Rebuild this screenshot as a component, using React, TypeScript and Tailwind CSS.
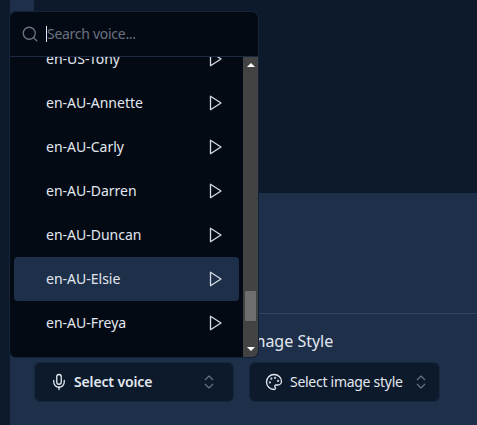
import { ChevronsUpDown, Mic, Palette, Search } from "lucide-react";

const voices = ["en-AU-Annette", "en-AU-Carly", "en-AU-Darren", "en-AU-Duncan", "en-AU-Elsie", "en-AU-Freya"];

function PlayIcon() {
  return (
    <svg width="18" height="18" viewBox="0 0 24 24" fill="none" stroke="currentColor" strokeWidth="1.75" strokeLinejoin="round" strokeLinecap="round" className="text-[#d5dbe4]">
      <polygon points="6 3 20 12 6 21 6 3" />
    </svg>
  );
}

function VoiceRow({ name, active }: { name: string; active?: boolean }) {
  return (
    <div
      className={
        "flex h-11 shrink-0 items-center justify-between rounded pl-8 pr-[15px] text-[#e2e8f0] " +
        (active ? "bg-[#1e2f4a]" : "")
      }
    >
      <span className="text-sm">{name}</span>
      <PlayIcon />
    </div>
  );
}

export default function App() {
  return (
    <div className="relative flex h-[425px] w-[477px] overflow-hidden bg-[#0c1a2b] font-['Noto_Sans',sans-serif]">
      <div className="w-2.5 shrink-0" />
      <main className="flex min-w-0 flex-1 flex-col">
        <div className="flex h-[193px] shrink-0 bg-[#0d1a2b]">
          <div className="h-full w-6 bg-[#1e2f4a]" />
        </div>
        <div className="flex flex-1 flex-col bg-[#1e2f4a] pl-6">
          <div className="mt-[120px] border-t border-[#33445e]" />
          <div className="mt-[15px] pl-[211px] text-base text-[#e2e8f0]">Image Style</div>
          <div className="mt-[9px] flex gap-[15px]">
            <button className="flex h-10 w-[200px] items-center rounded-md border border-[#182740] bg-[#0d1a2b] pl-[15px] pr-[15px] text-sm font-semibold text-[#e2e8f0]">
              <Mic size={18} strokeWidth={1.75} />
              <span className="ml-1.5 flex-1 text-left tracking-[-0.01em]">Select voice</span>
              <ChevronsUpDown size={18} strokeWidth={1.5} className="text-[#64748b]" />
            </button>
            <button className="flex h-10 w-[191px] items-center rounded-md border border-[#182740] bg-[#0d1a2b] pl-[15px] pr-[9px] text-sm text-[#e2e8f0]">
              <Palette size={18} strokeWidth={1.75} />
              <span className="ml-[7px] flex-1 text-left tracking-[-0.02em]">Select image style</span>
              <ChevronsUpDown size={18} strokeWidth={1.5} className="text-[#64748b]" />
            </button>
          </div>
        </div>
      </main>

      <div className="absolute left-2.5 top-3 flex h-[345px] w-[248px] flex-col overflow-hidden rounded-md bg-[#040a14] ring-1 ring-[#14233a]">
        <div className="flex h-[45px] shrink-0 items-center gap-[7px] border-b border-[#1b2a40] pl-[11px]">
          <Search size={18} strokeWidth={1.75} className="text-[#6b7280]" />
          <span className="border-l border-[#e2e8f0] text-sm leading-4 tracking-[-0.02em] text-[#6b7280]">Search voice...</span>
        </div>
        <div className="flex min-h-0 flex-1">
          <div className="flex min-w-0 flex-1 flex-col overflow-hidden px-1">
            <div className="-mt-5 flex h-11 shrink-0 items-center justify-between pl-8 pr-[15px] text-[#e2e8f0]">
              <span className="text-sm">en-US-Tony</span>
              <PlayIcon />
            </div>
            {voices.map((v) => (
              <VoiceRow key={v} name={v} active={v === "en-AU-Elsie"} />
            ))}
          </div>
          <div className="flex w-[15px] shrink-0 flex-col items-center bg-[#434343] py-1.5">
            <div className="h-0 w-0 border-x-4 border-b-4 border-x-transparent border-b-white" />
            <div className="mt-[224px] h-[30px] w-[11px] bg-[#6e6e6e]" />
            <div className="mt-auto h-0 w-0 border-x-4 border-t-4 border-x-transparent border-t-white" />
          </div>
        </div>
      </div>
    </div>
  );
}
